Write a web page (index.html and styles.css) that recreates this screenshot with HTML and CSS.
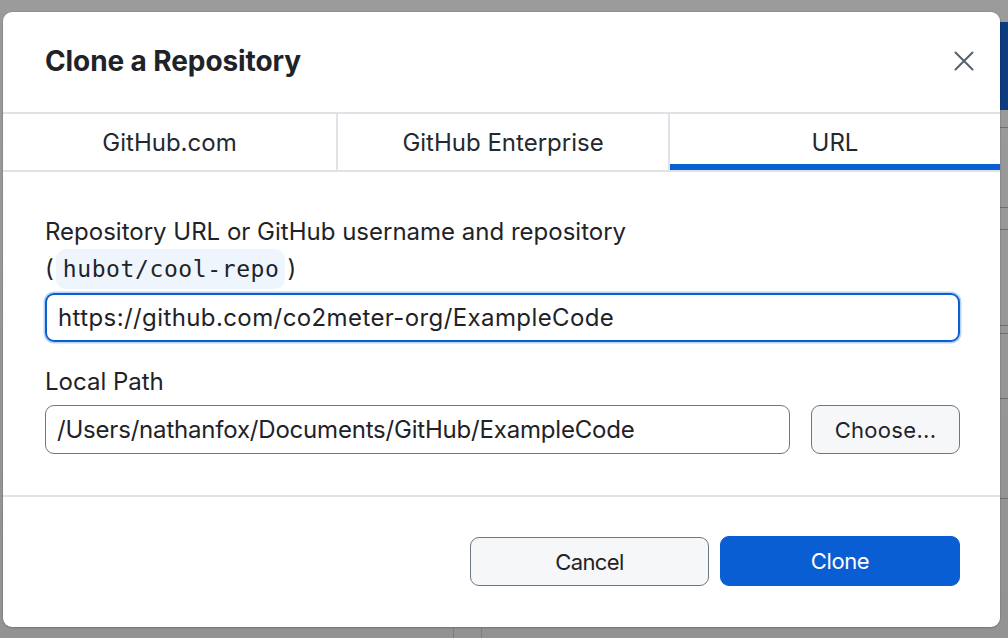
FILE: index.html
```html
<!DOCTYPE html>
<html lang="en">
<head>
<meta charset="utf-8">
<title>Clone a Repository</title>
<link rel="stylesheet" href="styles.css">
</head>
<body>
<div class="app">
  <div class="app-strip"></div>
  <div class="app-line l1"></div>
  <div class="app-line l2"></div>
  <div class="app-line l3"></div>
  <div class="app-line l4"></div>
  <div class="app-line l5"></div>
  <div class="app-line l6"></div>
  <div class="app-line l7"></div>
  <div class="app-vline v1"></div>
  <div class="app-vline v2"></div>

  <div class="dialog" role="dialog" aria-label="Clone a Repository">
    <header class="dialog-header">
      <h1 class="dialog-title">Clone a Repository</h1>
      <button class="close-btn" aria-label="Close">
        <svg width="20" height="20" viewBox="0 0 20 20"><path d="M1.5 1.5 L18.5 18.5 M18.5 1.5 L1.5 18.5" stroke="#57606a" stroke-width="2" stroke-linecap="round" fill="none"/></svg>
      </button>
    </header>
    <nav class="tabs">
      <div class="tab">GitHub.com</div>
      <div class="tab">GitHub Enterprise</div>
      <div class="tab active">URL</div>
    </nav>
    <section class="dialog-body">
      <label class="field-label">Repository URL or GitHub username and repository<br>(<code class="code">hubot/cool-repo</code>)</label>
      <div class="input focused">https://github.com/co2meter-org/ExampleCode</div>
      <label class="field-label local">Local Path</label>
      <div class="path-row">
        <div class="input path">/Users/nathanfox/Documents/GitHub/ExampleCode</div>
        <button class="btn choose">Choose...</button>
      </div>
    </section>
    <footer class="dialog-footer">
      <button class="btn cancel">Cancel</button>
      <button class="btn primary">Clone</button>
    </footer>
  </div>
</div>
</body>
</html>
```
FILE: styles.css
```css
* { box-sizing: border-box; }
html, body { margin: 0; padding: 0; }
body {
  width: 1008px;
  height: 638px;
  overflow: hidden;
  background: #999999;
  font-family: Inter, "Noto Sans", sans-serif;
  color: #1f2328;
}
.app {
  position: relative;
  width: 1008px;
  height: 638px;
  background: linear-gradient(#9b9b9b, #939393);
}
.app-strip {
  position: absolute;
  left: 1000px; top: 22px;
  width: 8px; height: 88px;
  background: #0d3d7e;
}
.app-line {
  position: absolute;
  left: 1000px; width: 8px; height: 1px;
  background: #6f6f6f;
}
.l1 { top: 127px; } .l2 { top: 207px; } .l3 { top: 229px; }
.l4 { top: 325px; } .l5 { top: 333px; } .l6 { top: 398px; } .l7 { top: 498px; }
.app-vline {
  position: absolute;
  top: 628px; width: 1px; height: 10px;
  background: #7d7d7d;
}
.v1 { left: 453px; } .v2 { left: 481px; }

.dialog {
  position: absolute;
  left: 3px; top: 12px;
  width: 997px; height: 615px;
  background: #ffffff;
  border-radius: 9px;
  box-shadow: 0 0 0 1px rgba(0,0,0,0.06), 0 1px 2px rgba(0,0,0,0.15);
  display: flex;
  flex-direction: column;
  overflow: hidden;
}
.dialog-header {
  height: 102px;
  flex: none;
  display: flex;
  align-items: center;
  justify-content: space-between;
  padding: 0 23px 2px 42px;
  border-bottom: 2px solid #dfe2e6;
}
.dialog-title {
  margin: 0;
  font-size: 28px;
  font-weight: 700;
  letter-spacing: -0.1px;
  color: #1f2328;
}
.close-btn {
  border: 0;
  background: none;
  padding: 0;
  width: 26px; height: 26px;
  display: flex; align-items: center; justify-content: center;
}
.tabs {
  height: 58px;
  flex: none;
  display: grid;
  grid-template-columns: 333px 332px 332px;
  border-bottom: 2px solid #dfe2e6;
}
.tab {
  display: flex;
  align-items: center;
  justify-content: center;
  font-size: 24px;
  color: #24292f;
  border-left: 2px solid #dfe2e6;
}
.tab:first-child { border-left: 0; }
.tab.active {
  box-shadow: inset 0 -6px 0 #0a5fd2;
}
.dialog-body {
  flex: none;
  padding: 41px 40px 0 42px;
  height: 325px;
  border-bottom: 2px solid #dfe2e6;
}
.field-label {
  display: block;
  font-size: 24px;
  line-height: 37px;
  color: #1f2328;
}
.code {
  font-family: "DejaVu Sans Mono", monospace;
  font-size: 23px;
  letter-spacing: 0.6px;
  background: #eef5fd;
  border-radius: 10px;
  padding: 7px 6px 7px 7px;
  margin: 0 2px;
}
.input {
  height: 49px;
  border: 1.5px solid #6e7781;
  border-radius: 9px;
  padding: 0 11px;
  display: flex;
  align-items: center;
  font-size: 24px;
  color: #1f2328;
}
.input.focused {
  margin-top: 5px;
  border: 2px solid #0a5fd2;
  box-shadow: 0 0 0 1.5px #b9d3f5;
  letter-spacing: 0.4px;
}
.field-label.local { margin-top: 21px; }
.path-row {
  margin-top: 5px;
  display: flex;
  gap: 21px;
}
.input.path { flex: 1; letter-spacing: -0.2px; }
.btn {
  font-family: Inter, "Noto Sans", sans-serif;
  font-size: 22px;
  height: 49px;
  border-radius: 9px;
  border: 1.5px solid #6e7781;
  background: #f6f7f9;
  color: #1f2328;
  padding: 0;
}
.btn.choose { width: 149px; letter-spacing: 0.3px; }
.dialog-footer {
  flex: 1;
  display: flex;
  justify-content: flex-end;
  align-items: flex-start;
  gap: 11px;
  padding: 40px 40px 0 0;
}
.btn.cancel { width: 239px; letter-spacing: -0.6px; }
.btn.primary {
  width: 240px;
  height: 50px;
  margin-top: -1px;
  background: #0a5ed3;
  border-color: #0a5ed3;
  color: #ffffff;
  letter-spacing: -0.4px;
}
```
